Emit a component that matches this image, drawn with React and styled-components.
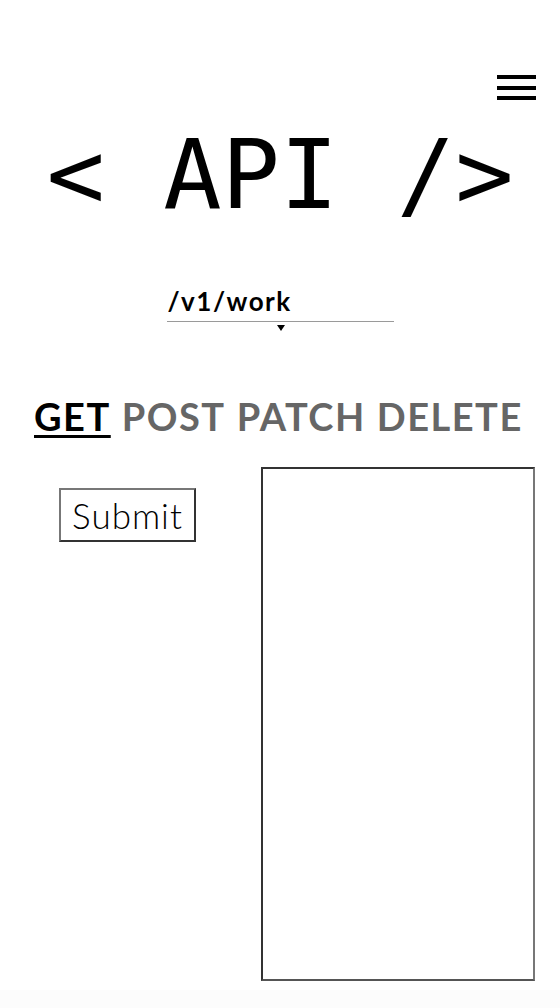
import React from "react";
import styled, { createGlobalStyle } from "styled-components";

const Global = createGlobalStyle`
  html, body { margin: 0; padding: 0; background: #fcfcfc; }
  body { font-family: "Lato", "Open Sans", sans-serif; color: #000; }
`;

const Page = styled.div`
  background: #fff;
  min-height: 990px;
  box-sizing: border-box;
  display: flex;
  flex-direction: column;
`;

const TopBar = styled.header`
  display: flex;
  justify-content: flex-end;
  padding: 75px 24px 0 0;
`;

const Burger = styled.button`
  width: 39px;
  height: 25px;
  padding: 0;
  border: 0;
  background: none;
  display: flex;
  flex-direction: column;
  justify-content: space-between;
  cursor: pointer;
`;

const BurgerLine = styled.span`
  display: block;
  height: 4px;
  background: #000;
`;

const Title = styled.h1`
  margin: 26px 0 0;
  text-align: center;
  font-family: "DejaVu Sans Mono", monospace;
  font-weight: 400;
  font-size: 97px;
  line-height: 1;
`;

const SelectWrap = styled.div`
  position: relative;
  width: 227px;
  margin: 62px auto 0;
  &::after {
    content: "";
    position: absolute;
    left: 110px;
    top: 100%;
    margin-top: 3px;
    border-left: 4px solid transparent;
    border-right: 4px solid transparent;
    border-top: 6px solid #000;
  }
`;

const Select = styled.select`
  appearance: none;
  -webkit-appearance: none;
  width: 100%;
  border: 0;
  border-bottom: 1px solid #9a9a9a;
  border-radius: 0;
  background: transparent;
  padding: 0 0 4px 1px;
  font-family: "Lato", sans-serif;
  font-weight: 700;
  font-size: 26px;
  letter-spacing: 1.5px;
  color: #000;
  outline: none;
`;

const Tabs = styled.nav`
  display: flex;
  gap: 11px;
  padding: 72px 0 0 34px;
`;

const Tab = styled.a`
  font-family: "Lato", sans-serif;
  font-weight: 700;
  font-size: 38px;
  letter-spacing: 1.5px;
  line-height: 1.2;
  color: ${(p) => (p.$active ? "#000" : "#666")};
  text-decoration: ${(p) => (p.$active ? "underline" : "none")};
  text-decoration-thickness: 3px;
  text-underline-offset: 4px;
  cursor: pointer;
`;

const Main = styled.main`
  display: flex;
  align-items: flex-start;
  padding: 27px 25px 0 59px;
`;

const Left = styled.div`
  flex: 1;
  padding-top: 21px;
`;

const SubmitButton = styled.button`
  box-sizing: border-box;
  width: 137px;
  height: 54px;
  background: #fff;
  border: 2px solid;
  border-color: #777 #333 #333 #777;
  font-family: "Lato", sans-serif;
  font-weight: 300;
  font-size: 35px;
  letter-spacing: 1px;
  color: #000;
  padding: 0;
`;

const Output = styled.textarea`
  box-sizing: border-box;
  width: 274px;
  height: 514px;
  border: 2px solid;
  border-color: #333 #777 #555 #333;
  resize: none;
  background: #fff;
`;

export default function App() {
  return (
    <>
      <Global />
      <Page>
        <TopBar>
          <Burger aria-label="menu">
            <BurgerLine />
            <BurgerLine />
            <BurgerLine />
          </Burger>
        </TopBar>
        <Title>&lt; API /&gt;</Title>
        <SelectWrap>
          <Select defaultValue="/v1/work">
            <option>/v1/work</option>
          </Select>
        </SelectWrap>
        <Tabs>
          <Tab $active>GET</Tab>
          <Tab>POST</Tab>
          <Tab>PATCH</Tab>
          <Tab>DELETE</Tab>
        </Tabs>
        <Main>
          <Left>
            <SubmitButton>Submit</SubmitButton>
          </Left>
          <Output readOnly />
        </Main>
      </Page>
    </>
  );
}
